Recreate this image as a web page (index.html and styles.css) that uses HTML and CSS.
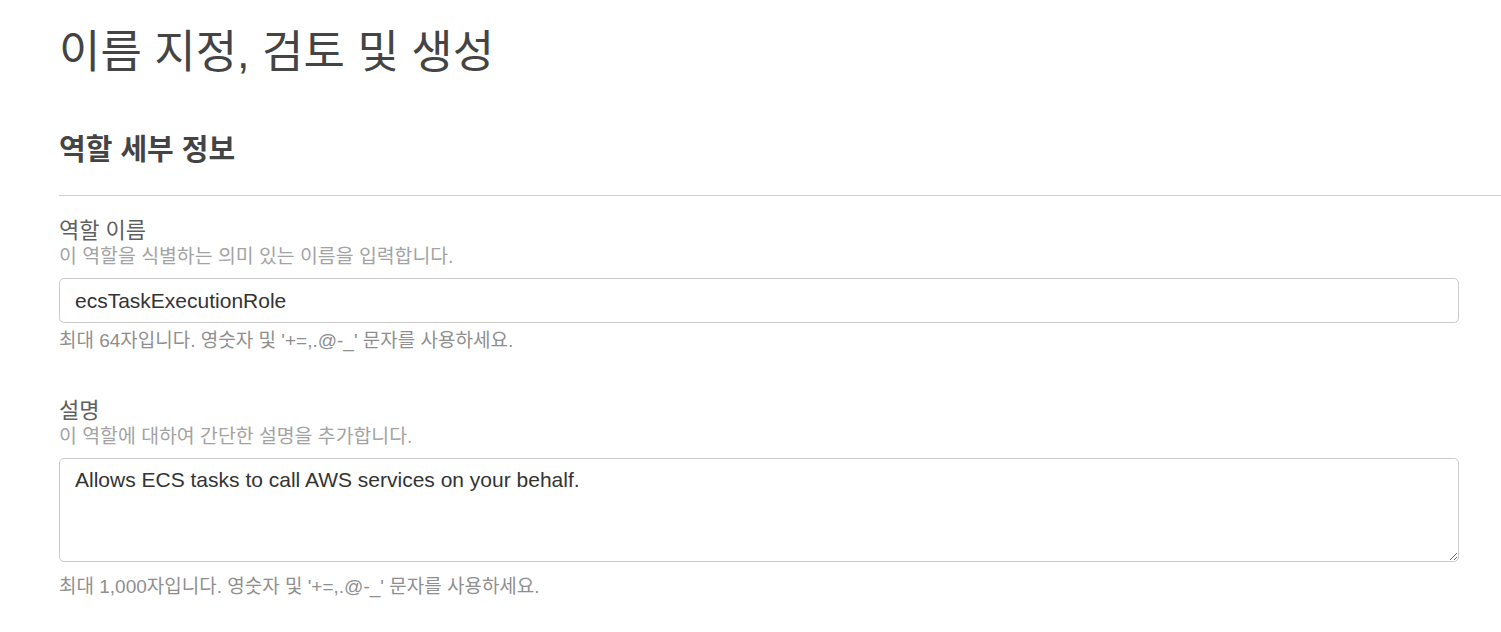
FILE: index.html
```html
<!DOCTYPE html>
<html lang="ko">
<head>
<meta charset="utf-8">
<link rel="stylesheet" href="styles.css">
</head>
<body>
<main class="page">
  <h1 class="title">이름 지정, 검토 및 생성</h1>
  <section class="section">
    <h2 class="section-title">역할 세부 정보</h2>
    <hr class="divider">
    <div class="field">
      <div class="label">역할 이름</div>
      <div class="desc">이 역할을 식별하는 의미 있는 이름을 입력합니다.</div>
      <input class="input" type="text" value="ecsTaskExecutionRole">
      <div class="hint">최대 64자입니다. 영숫자 및 '+=,.@-_' 문자를 사용하세요.</div>
    </div>
    <div class="field field-desc">
      <div class="label">설명</div>
      <div class="desc">이 역할에 대하여 간단한 설명을 추가합니다.</div>
      <textarea class="textarea">Allows ECS tasks to call AWS services on your behalf.</textarea>
      <div class="hint hint-last">최대 1,000자입니다. 영숫자 및 '+=,.@-_' 문자를 사용하세요.</div>
    </div>
  </section>
</main>
</body>
</html>
```
FILE: styles.css
```css
* { box-sizing: border-box; }
html, body { margin: 0; padding: 0; background: #fff; }
body {
  font-family: "Liberation Sans", "Noto Sans CJK KR", sans-serif;
  color: #444;
  overflow: hidden;
}
.page {
  padding: 25px 0 0 59px;
}
.title {
  margin: 0;
  font-size: 45px;
  line-height: 56px;
  font-weight: 400;
  color: #444;
}
.section { margin-top: 51px; }
.section-title {
  margin: 0;
  font-size: 29px;
  line-height: 36px;
  font-weight: 700;
  color: #444;
}
.divider {
  margin: 27px 0 0 0;
  border: 0;
  border-top: 1px solid #cfcfcf;
  height: 0;
}
.field { width: 1400px; padding-top: 22px; }
.field-desc { padding-top: 45px; }
.label {
  font-size: 22px;
  line-height: 26px;
  color: #5f5f5f;
}
.desc {
  font-size: 19.4px;
  line-height: 24px;
  color: #a3a3a3;
}
.input, .textarea {
  display: block;
  width: 100%;
  margin-top: 10px;
  border: 1px solid #cbcbcb;
  border-radius: 5px;
  background: #fff;
  font-family: "Liberation Sans", "Noto Sans CJK KR", sans-serif;
  font-size: 21px;
  color: #333;
  padding: 0 15px;
  outline: none;
}
.input { height: 45px; }
.textarea {
  height: 104px;
  padding-top: 9px;
  line-height: 24px;
  resize: vertical;
}
.hint {
  margin-top: 6px;
  font-size: 19px;
  line-height: 24px;
  color: #8f8f8f;
}
.hint-last { margin-top: 13px; }
```
